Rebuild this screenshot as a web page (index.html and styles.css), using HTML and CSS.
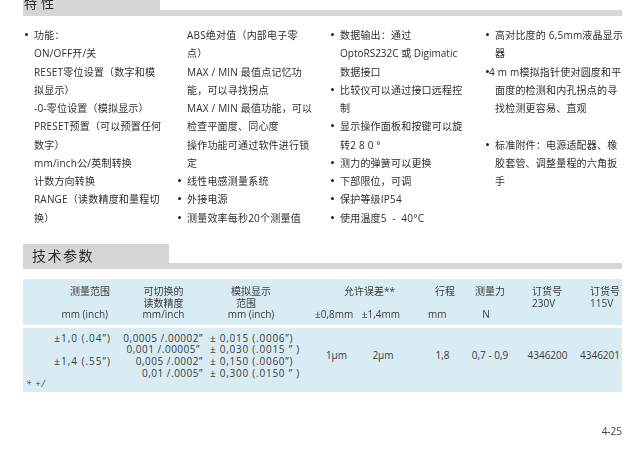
FILE: index.html
```html
<!DOCTYPE html>
<html lang="zh">
<head>
<meta charset="utf-8">
<title>特性 技术参数</title>
<link rel="stylesheet" href="styles.css">
</head>
<body>
<main class="page">
  <header class="heading heading-top"><h2 class="tab tab-top">特性</h2></header>
  <section class="features">
    <ul class="col col-1">
      <li>功能：<br>ON/OFF开/关<br>RESET零位设置（数字和模<br>拟显示）<br>-0-零位设置（模拟显示）<br>PRESET预置（可以预置任何<br>数字）<br>mm/inch公/英制转换<br>计数方向转换<br>RANGE（读数精度和量程切<br>换）</li>
    </ul>
    <ul class="col col-2">
      <li class="plain">ABS绝对值（内部电子零<br>点）<br>MAX / MIN 最值点记忆功<br>能，可以寻找拐点<br>MAX / MIN 最值功能，可以<br>检查平面度、同心度<br>操作功能可通过软件进行锁<br>定</li>
      <li>线性电感测量系统</li>
      <li>外接电源</li>
      <li>测量效率每秒20个测量值</li>
    </ul>
    <ul class="col col-3">
      <li>数据输出：通过<br><span class="tight-line">OptoRS232C 或 Digimatic</span><br>数据接口</li>
      <li>比较仪可以通过接口远程控<br>制</li>
      <li>显示操作面板和按键可以旋<br>转2 8 0 °</li>
      <li>测力的弹簧可以更换</li>
      <li>下部限位，可调</li>
      <li>保护等级IP54</li>
      <li>使用温度5 &nbsp;- &nbsp;40°C</li>
    </ul>
    <ul class="col col-4">
      <li>高对比度的 6,5mm液晶显示<br>器</li>
      <li class="hanging">4 m m模拟指针使对圆度和平<br>面度的检测和内孔拐点的寻<br>找检测更容易、直观</li>
      <li class="spaced">标准附件：电源适配器、橡<br>胶套管、调整量程的六角扳<br>手</li>
    </ul>
  </section>

  <header class="heading heading-tech"><h2 class="tab tab-tech">技术参数</h2></header>

  <section class="spec">
    <div class="row row-head">
      <div class="cell c1 shift-a">测量范围<br>&nbsp;<br><span class="unit-range">mm (inch)</span></div>
      <div class="cell c2 center">可切换的<br>读数精度<br>mm/inch</div>
      <div class="cell c3 center">模拟显示<br><span class="sub-range">范围</span><br>mm (inch)</div>
      <div class="cell c45">
        <div class="center">允许误差**</div>
        <div>&nbsp;</div>
        <div class="pair"><span>±0,8mm</span><span>±1,4mm</span></div>
      </div>
      <div class="cell c6 head-travel">行程<br>&nbsp;<br><span class="unit-travel">mm</span></div>
      <div class="cell c7 center">测量力<br>&nbsp;<br><span class="unit-force">N</span></div>
      <div class="cell c8 head-order">订货号<br>230V</div>
      <div class="cell c9 head-order">订货号<br>115V</div>
    </div>
    <div class="row row-body">
      <div class="cell c1 right spaced-1">±1,0 (.04”)<br>&nbsp;<br>±1,4 (.55”)</div>
      <div class="cell c2 right spaced-2">0,0005 /.00002”<br><span class="nudge">0,001 /.00005”</span><br>0,005 /.0002”<br>0,01 /.0005”</div>
      <div class="cell c3 spaced-3">± 0,015 (.0006”)<br>± 0,030 (.0015 ” )<br>± 0,150 (.0060”)<br>± 0,300 (.0150 ” )</div>
      <div class="cell c4 center mid val-1">1µm</div>
      <div class="cell c5 center mid val-2">2µm</div>
      <div class="cell c6 center mid val-3">1,8</div>
      <div class="cell c7 center mid">0,7 - 0,9</div>
      <div class="cell c8 center mid">4346200</div>
      <div class="cell c9 center mid val-4">4346201</div>
      <p class="note">* +/</p>
    </div>
  </section>

  <footer class="pageno">4-25</footer>
</main>
</body>
</html>
```
FILE: styles.css
```css
* { box-sizing: border-box; }
html, body { margin: 0; padding: 0; background: #fff; }
body {
  width: 640px;
  height: 450px;
  overflow: hidden;
  font-family: "Open Sans", "Noto Sans CJK SC", sans-serif;
  color: #2e2e2e;
}
.page {
  width: 599px;
  margin-left: 23px;
  filter: blur(0.45px);
}
.heading { border-bottom: 6px solid #d6d6d6; }
.heading-top { height: 16px; }
.heading-tech { height: 25px; margin-top: 23px; }
.tab {
  margin: 0;
  background: #d6d6d6;
  font-weight: 400;
  color: #2b2b2b;
  overflow: hidden;
}
.tab-top {
  width: 137px;
  height: 16px;
  padding-left: 1px;
  font-size: 13px;
  line-height: 6px;
  letter-spacing: 4px;
}
.tab-tech {
  width: 146px;
  height: 25px;
  padding-left: 9px;
  font-size: 14px;
  line-height: 23px;
  letter-spacing: 1.5px;
}
.features {
  display: flex;
  padding-top: 10px;
  height: 205px;
  font-size: 10px;
  line-height: 18.25px;
  letter-spacing: 0.2px;
}
.col { list-style: none; margin: 0; padding: 0; white-space: nowrap; flex: none; }
.col-1 { width: 153px; }
.col-2 { width: 153px; }
.col-3 { width: 155px; }
.col li { position: relative; padding-left: 11px; }
.col li::before {
  content: "";
  position: absolute;
  left: 2px;
  top: 7px;
  width: 3px;
  height: 3px;
  border-radius: 50%;
  background: #222;
}
.col li.plain::before { display: none; }
.col li.spaced { margin-top: 18.25px; }
.col li.hanging { text-indent: -6px; }
.tight-line { letter-spacing: 0; }
.spec { margin-top: 10px; font-size: 10px; line-height: 11.7px; color: #3a3a3a; }
.row {
  display: grid;
  grid-template-columns: 97px 87px 98px 57px 40px 63px 50px 65px 42px;
  background: #d9ecf4;
}
.row-head { height: 46px; padding-top: 7px; margin-bottom: 3px; }
.row-body { height: 64px; padding-top: 4.5px; position: relative; }
.cell { white-space: nowrap; }
.center { text-align: center; }
.right { text-align: right; }
.c1.right { padding-right: 9px; }
.c2.right { padding-right: 4px; }
.c3 { padding-left: 3px; }
.c3.center { padding-left: 0; padding-right: 10px; }
.c45 { grid-column: span 2; }
.c45 .center { padding-left: 32px; }
.pair { display: flex; justify-content: space-between; padding: 0 2px 0 10px; }
.shift-a { text-align: right; padding-right: 10px; }
.unit-range { margin-right: 2px; }
.sub-range { margin-right: 10px; }
.head-travel { padding-left: 33px; }
.unit-travel { margin-left: -7px; }
.unit-force { margin-right: 8px; }
.c8.head-order { padding-left: 17px; }
.c9.head-order { padding-left: 10px; }
.spaced-1 { letter-spacing: 1px; }
.spaced-2 { letter-spacing: 0.5px; }
.spaced-3 { letter-spacing: 0.75px; }
.nudge { margin-right: 3px; }
.mid { padding-top: 17px; }
.val-1 { padding-left: 6px; }
.val-2 { padding-left: 2px; }
.val-3 { padding-left: 18px; }
.val-4 { padding-right: 4px; }
.note {
  position: absolute;
  left: 3px;
  top: 50px;
  margin: 0;
  font-size: 9px;
  font-style: italic;
  letter-spacing: 1px;
}
.pageno {
  margin-top: 33px;
  text-align: right;
  font-size: 10px;
  line-height: 12px;
  color: #3a3a3a;
}
```
